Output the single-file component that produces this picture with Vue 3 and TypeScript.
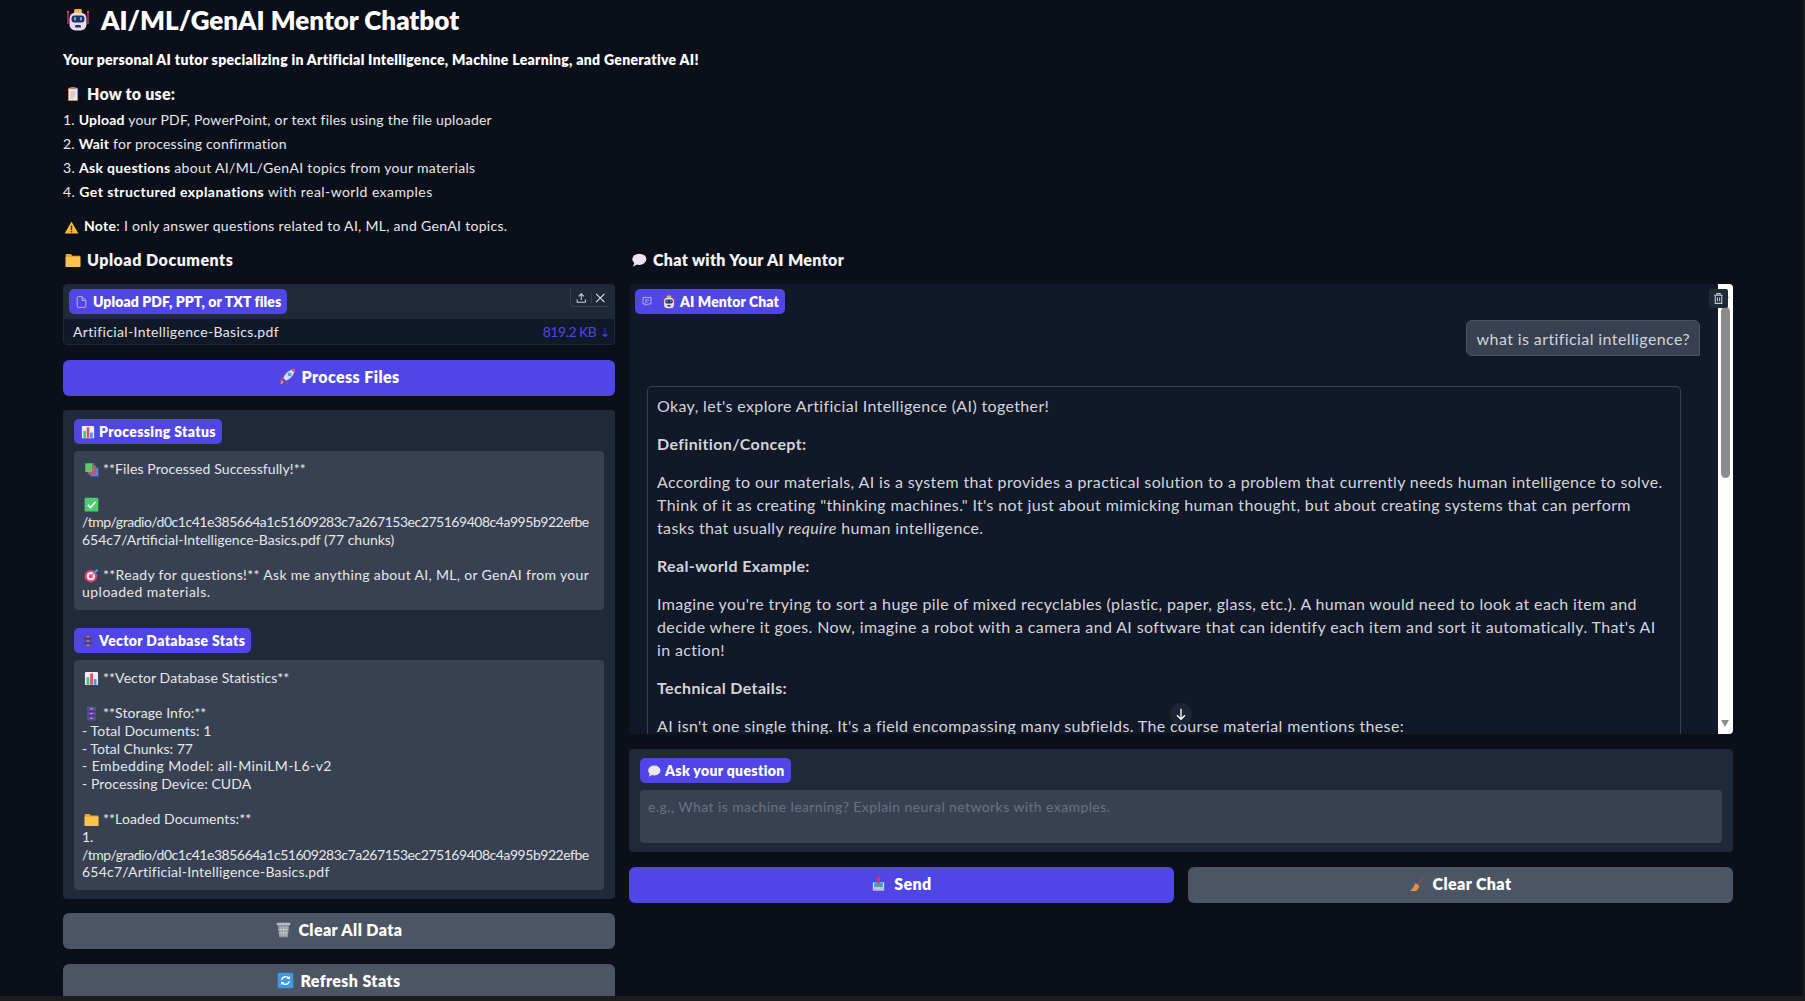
<script setup lang="ts">
const steps = [
  { n: '1.', b: 'Upload', t: ' your PDF, PowerPoint, or text files using the file uploader', fit: 'ls2' },
  { n: '2.', b: 'Wait', t: ' for processing confirmation', fit: 'ls2' },
  { n: '3.', b: 'Ask questions', t: ' about AI/ML/GenAI topics from your materials', fit: 'ls3' },
  { n: '4.', b: 'Get structured explanations', t: ' with real-world examples', fit: 'ls4' },
]
const hash = '/tmp/gradio/d0c1c41e385664a1c51609283c7a267153ec275169408c4a995b922efbe'
interface Line { text: string; icon?: string; fit?: string }
const statusLines: Line[] = [
  { icon: 'books', text: '**Files Processed Successfully!**', fit: 'ls1' },
  { text: '' },
  { icon: 'check', text: '' },
  { text: hash, fit: 'tight' },
  { text: '654c7/Artificial-Intelligence-Basics.pdf (77 chunks)' },
  { text: '' },
  { icon: 'target', text: '**Ready for questions!** Ask me anything about AI, ML, or GenAI from your', fit: 'ls3' },
  { text: 'uploaded materials.', fit: 'ls5' },
]
const statsLines: Line[] = [
  { icon: 'chart', text: '**Vector Database Statistics**', fit: 'ls1' },
  { text: '' },
  { icon: 'cabinet', text: '**Storage Info:**', fit: 'ls1' },
  { text: '- Total Documents: 1', fit: 'ls1' },
  { text: '- Total Chunks: 77' },
  { text: '- Embedding Model: all-MiniLM-L6-v2', fit: 'ls4' },
  { text: '- Processing Device: CUDA', fit: 'ls1' },
  { text: '' },
  { icon: 'folder', text: '**Loaded Documents:**', fit: 'ls1' },
  { text: '1.' },
  { text: hash, fit: 'tight' },
  { text: '654c7/Artificial-Intelligence-Basics.pdf', fit: 'ls2' },
]
</script>

<template>
  <div class="frame">
    <svg class="defs" aria-hidden="true">
      <defs>
        <symbol id="e-robot" viewBox="0 0 24 24">
          <path d="M2 5v11M22 5v11" stroke="#d5305a" stroke-width="1.4" />
          <circle cx="2" cy="4" r="1.2" fill="#e8345f" /><circle cx="22" cy="4" r="1.2" fill="#e8345f" />
          <rect x="8" y="1" width="8" height="4" rx="1.5" fill="#f2b632" />
          <rect x="3.5" y="4.5" width="17" height="18" rx="6" fill="#e4dcee" />
          <rect x="5.5" y="7.5" width="13" height="7" rx="3" fill="#26305c" />
          <rect x="8" y="9" width="2" height="3.6" rx="1" fill="#3fc6f2" /><rect x="14" y="9" width="2" height="3.6" rx="1" fill="#3fc6f2" />
          <rect x="9" y="17" width="6" height="2.6" rx="1.2" fill="#3a3350" />
        </symbol>
        <symbol id="e-clip" viewBox="0 0 24 24">
          <rect x="4.5" y="2.5" width="15" height="20" rx="1.5" fill="#c98a5a" />
          <rect x="6" y="4.5" width="12" height="16.5" fill="#eeeef2" />
          <rect x="8.5" y="1.5" width="7" height="3.5" rx="1" fill="#8b8f98" />
          <path d="M8 9h8M8 12h8M8 15h8M8 18h5" stroke="#9da2ad" stroke-width="1.2" />
        </symbol>
        <symbol id="e-warn" viewBox="0 0 24 24">
          <path d="M12 2.5 23 21.5H1Z" fill="#f6b73c" />
          <path d="M12 9v7" stroke="#3b2c10" stroke-width="2.2" /><circle cx="12" cy="18.6" r="1.3" fill="#3b2c10" />
        </symbol>
        <symbol id="e-folder" viewBox="0 0 24 24">
          <path d="M1 4a1 1 0 0 1 1-1h7l2 2.500h11a1 1 0 0 1 1 1V22H1Z" fill="#e9a52c" />
          <rect x="1" y="7.500" width="22" height="15" rx="1" fill="#fcc44f" />
        </symbol>
        <symbol id="e-speech" viewBox="0 0 24 24">
          <ellipse cx="12.5" cy="11" rx="10.5" ry="8.5" fill="#ece4f5" />
          <path d="M5 16 3 22l7-4Z" fill="#ece4f5" />
        </symbol>
        <symbol id="e-rocket" viewBox="0 0 24 24">
          <path d="M4 14 1 18l5-.5ZM10 20l-.5 4 4-3Z" fill="#e8424f" />
          <path d="M2 23c0-3 1-5 3-5.500l1.500 1.500C6 21 4.500 22.500 2 23Z" fill="#f5943c" />
          <path d="M22.500 1.500C15 2 9 7 6 14l4 4c7-3 12-9 12.500-16.500Z" fill="#d9dde8" />
          <circle cx="15" cy="9" r="2.600" fill="#3fa9e6" />
          <path d="M22.500 1.500c-2 .1-3.500.5-5 1.200l3.800 3.800c.7-1.500 1.100-3 1.200-5Z" fill="#e8424f" />
        </symbol>
        <symbol id="e-chart" viewBox="0 0 24 24">
          <rect x="1.500" y="1.500" width="21" height="21" rx="1.500" fill="#eceff3" />
          <rect x="4" y="10" width="4.500" height="12" fill="#4bc27a" />
          <rect x="9.800" y="4" width="4.500" height="18" fill="#e84a6a" />
          <rect x="15.600" y="13" width="4.500" height="9" fill="#3a97e0" />
        </symbol>
        <symbol id="e-books" viewBox="0 0 24 24">
          <rect x="10" y="9" width="13" height="14" fill="#5a7fe0" />
          <rect x="6" y="5.500" width="13" height="14" fill="#d9487c" />
          <rect x="2" y="2" width="13" height="14" fill="#65c66b" />
          <rect x="13" y="2" width="2" height="14" fill="#3e9a49" />
        </symbol>
        <symbol id="e-check" viewBox="0 0 24 24">
          <rect x="1" y="1" width="22" height="22" rx="2" fill="#4ecb71" />
          <path d="m6 12.500 4.500 4.500L18.500 7.500" fill="none" stroke="#fff" stroke-width="2.600" />
        </symbol>
        <symbol id="e-target" viewBox="0 0 24 24">
          <circle cx="11" cy="13" r="10" fill="#e8456a" /><circle cx="11" cy="13" r="6.500" fill="#f2e9ee" />
          <circle cx="11" cy="13" r="3.200" fill="#e8456a" />
          <path d="m11 13 10-10" stroke="#4a9fe0" stroke-width="2" /><path d="m19 2 3 .5.500 3-3 1-1.500-1.500Z" fill="#4a9fe0" />
        </symbol>
        <symbol id="e-cabinet" viewBox="0 0 24 24">
          <rect x="5" y="1" width="14" height="22" rx="1.500" fill="#5f4a9c" />
          <path d="M5 8.500h14M5 16h14" stroke="#352a63" stroke-width="1.200" />
          <path d="M10.500 4.500h3M10.500 12h3M10.500 19.500h3" stroke="#d9d3ec" stroke-width="1.500" />
        </symbol>
        <symbol id="e-trash" viewBox="0 0 24 24">
          <rect x="2.500" y="2.500" width="19" height="3.500" rx="1" fill="#b8bcc6" />
          <path d="M4 6h16l-2 17H6Z" fill="#9499a6" />
          <path d="M8 8l1 13M12 8v13M16 8l-1 13M5 12h14M5.500 17h13" stroke="#d6d9e0" stroke-width=".9" />
        </symbol>
        <symbol id="e-refresh" viewBox="0 0 24 24">
          <rect x="1" y="1" width="22" height="22" rx="2.500" fill="#3f97e8" />
          <path d="M6.500 11a5.800 5.800 0 0 1 10-2.500M17.500 13a5.800 5.800 0 0 1-10 2.500" fill="none" stroke="#fff" stroke-width="2" />
          <path d="m18 5.500.2 4.700-4.500-.5ZM6 18.500l-.2-4.700 4.500.5Z" fill="#fff" />
        </symbol>
        <symbol id="e-send" viewBox="0 0 24 24">
          <path d="M3 10h18v13H3Z" fill="#dfe2ea" />
          <rect x="5" y="10" width="14" height="8" fill="#38a3dc" />
          <path d="M3 18h6l1 2h4l1-2h6v5H3Z" fill="#c9b8d8" />
          <path d="M12 13V3" stroke="#e8344f" stroke-width="2.600" /><path d="m12 0 4.500 5.500h-9Z" fill="#e8344f" />
        </symbol>
        <symbol id="e-broom" viewBox="0 0 24 24">
          <path d="M23 0 11 15" stroke="#b8503f" stroke-width="1.400" />
          <path d="M9 11 15 16c-1 3.500-3 6-5 8H0c3-2 6-7 9-13Z" fill="#f58a35" />
        </symbol>
      </defs>
    </svg>

    <div class="page">
      <h1 class="title"><svg class="em em-title"><use href="#e-robot" /></svg>AI/ML/GenAI Mentor Chatbot</h1>
      <p class="tagline">Your personal AI tutor specializing in Artificial Intelligence, Machine Learning, and Generative AI!</p>
      <h3 class="howto"><svg class="em em-head"><use href="#e-clip" /></svg>How to use:</h3>
      <ol class="steps">
        <li v-for="s in steps" :key="s.n" :class="s.fit">{{ s.n }} <strong>{{ s.b }}</strong>{{ s.t }}</li>
      </ol>
      <p class="note"><svg class="em em-note"><use href="#e-warn" /></svg><strong>Note</strong>: I only answer questions related to AI, ML, and GenAI topics.</p>

      <div class="cols">
        <section class="col-left">
          <h3 class="sec"><svg class="em em-head"><use href="#e-folder" /></svg>Upload Documents</h3>

          <div class="file-panel">
            <div class="file-head">
              <span class="badge file-badge">
                <svg class="ico-file" viewBox="0 0 24 24" fill="none" stroke="#b9b5f4" stroke-width="1.800"><path d="M13 2H6a2 2 0 0 0-2 2v16a2 2 0 0 0 2 2h12a2 2 0 0 0 2-2V9z" /><path d="M13 2v7h7" /></svg>
                Upload PDF, PPT, or TXT files
              </span>
              <div class="file-tools">
                <svg viewBox="0 0 24 24" fill="none" stroke="#d1d5db" stroke-width="2"><path d="M12 16V4M7 9l5-5 5 5" /><path d="M4 15v4a1 1 0 0 0 1 1h14a1 1 0 0 0 1-1v-4" /></svg>
                <i class="tool-sep"></i>
                <svg viewBox="0 0 24 24" fill="none" stroke="#e5e7eb" stroke-width="2"><path d="M4 4l16 16M20 4 4 20" /></svg>
              </div>
            </div>
            <div class="file-row">
              <span class="file-name">Artificial-Intelligence-Basics.pdf</span>
              <span class="file-size">819.2 KB <b>⇣</b></span>
            </div>
          </div>

          <button class="btn primary"><svg class="em em-btn"><use href="#e-rocket" /></svg>Process Files</button>

          <div class="panel stacked">
            <div>
              <span class="badge small"><svg class="em em-badge"><use href="#e-chart" /></svg>Processing Status</span>
              <div class="box">
                <div v-for="(l, i) in statusLines" :key="i" class="line" :class="l.fit">
                  <svg v-if="l.icon" class="em em-line"><use :href="'#e-' + l.icon" /></svg>{{ l.text }}
                </div>
              </div>
            </div>
            <div>
              <span class="badge small"><svg class="em em-badge"><use href="#e-cabinet" /></svg>Vector Database Stats</span>
              <div class="box">
                <div v-for="(l, i) in statsLines" :key="i" class="line" :class="l.fit">
                  <svg v-if="l.icon" class="em em-line"><use :href="'#e-' + l.icon" /></svg>{{ l.text }}
                </div>
              </div>
            </div>
          </div>

          <button class="btn secondary"><svg class="em em-btn"><use href="#e-trash" /></svg>Clear All Data</button>
          <button class="btn secondary"><svg class="em em-btn"><use href="#e-refresh" /></svg>Refresh Stats</button>
        </section>

        <section class="col-right">
          <h3 class="sec sec-chat"><svg class="em em-head"><use href="#e-speech" /></svg>Chat with Your AI Mentor</h3>

          <div class="chat">
            <span class="badge chat-badge">
              <svg class="ico-chat" viewBox="0 0 24 24" fill="none" stroke="#b9b5f4" stroke-width="1.800"><path d="M4 4h16v13h-7l-3 3v-3H4Z" /><path d="M8 9h8M8 13h5" /></svg>
              <svg class="em em-badge"><use href="#e-robot" /></svg>AI Mentor Chat
            </span>

            <div class="messages">
              <div class="bubble-wrap"><div class="bubble">what is artificial intelligence?</div></div>
              <div class="bot">
                <p>Okay, let's explore Artificial Intelligence (AI) together!</p>
                <p><strong>Definition/Concept:</strong></p>
                <p>According to our materials, AI is a system that provides a practical solution to a problem that currently needs human intelligence to solve.<br />Think of it as creating "thinking machines." It's not just about mimicking human thought, but about creating systems that can perform<br />tasks that usually <em>require</em> human intelligence.</p>
                <p><strong>Real-world Example:</strong></p>
                <p>Imagine you're trying to sort a huge pile of mixed recyclables (plastic, paper, glass, etc.). A human would need to look at each item and<br />decide where it goes. Now, imagine a robot with a camera and AI software that can identify each item and sort it automatically. That's AI<br />in action!</p>
                <p><strong>Technical Details:</strong></p>
                <p>AI isn't one single thing. It's a field encompassing many subfields. The course material mentions these:</p>
              </div>
            </div>

            <div class="track">
              <div class="arrow-up"></div>
              <div class="thumb"></div>
              <div class="arrow"></div>
            </div>

            <div class="trash-btn">
              <svg viewBox="0 0 24 24" fill="none" stroke="#c4c8d0" stroke-width="2"><path d="M4 6h16M9 6V3h6v3M6 6v15h12V6M10 10v7M14 10v7" /></svg>
            </div>
            <div class="to-bottom">
              <svg viewBox="0 0 24 24" fill="none" stroke="#fff" stroke-width="2"><path d="M12 4v16M6 14l6 6 6-6" /></svg>
            </div>
          </div>

          <div class="panel input-panel">
            <span class="badge small"><svg class="em em-badge"><use href="#e-speech" /></svg>Ask your question</span>
            <textarea class="input" placeholder="e.g., What is machine learning? Explain neural networks with examples."></textarea>
          </div>

          <div class="actions">
            <button class="btn primary"><svg class="em em-btn em-sm"><use href="#e-send" /></svg>Send</button>
            <button class="btn secondary"><svg class="em em-btn em-sm"><use href="#e-broom" /></svg>Clear Chat</button>
          </div>
        </section>
      </div>
    </div>
  </div>
</template>

<style>
html, body { margin: 0; background: #1c1c1c; overflow: hidden; }
</style>

<style scoped>
.frame {
  width: 1805px;
  height: 1001px;
  background: #1c1c1c;
  overflow: hidden;
  font-family: "Lato", "Noto Sans", sans-serif;
  color: #e5e7eb;
}
.defs { position: absolute; width: 0; height: 0; }
.page {
  width: 1803px;
  height: 996px;
  box-sizing: border-box;
  padding: 0 69px 0 63px;
  background: #0b0f19;
  overflow: hidden;
}
.em { display: inline-block; flex: none; vertical-align: middle; }
.em-title { width: 24px; height: 24px; margin: 0 11px 0 3px; }
.em-head { width: 16px; height: 16px; margin: 0 6px 0 2px; }
.em-note { width: 15px; height: 15px; margin: 0 5px 0 1px; }
.em-btn { width: 17px; height: 17px; margin-right: 6px; }
.em-sm { width: 15px; height: 15px; margin-right: 8px; }
.em-badge { width: 14px; height: 14px; margin-right: 4px; }
.em-line { width: 15px; height: 15px; margin: 0 4px 0 2px; position: relative; top: -1px; }

.title {
  margin: 0;
  height: 40px;
  line-height: 40px;
  font-size: 26px;
  font-weight: 800;
  letter-spacing: 0;
  color: #fff;
  display: flex;
  align-items: center;
}
.tagline {
  margin: 10px 0 0;
  line-height: 20px;
  font-size: 14px;
  font-weight: 800;
  letter-spacing: 0.3px;
  color: #fff;
}
.howto, .sec {
  margin: 14px 0 0;
  line-height: 20px;
  height: 20px;
  font-size: 16px;
  font-weight: 800;
  color: #f3f4f6;
  display: flex;
  align-items: center;
}
.howto { letter-spacing: 0.2px; }
.steps { list-style: none; margin: 4px 0 0; padding: 0; }
.steps li { height: 24px; line-height: 24px; font-size: 14px; color: #e5e7eb; }
.steps strong, .note strong { color: #fff; font-weight: 700; }
.note { margin: 12px 0 0; line-height: 20px; font-size: 14px; letter-spacing: 0.3px; color: #e5e7eb; }

.cols {
  margin-top: 14px;
  display: grid;
  grid-template-columns: 552px 1104px;
  column-gap: 14px;
}
.col-left, .col-right { display: flex; flex-direction: column; }
.sec { margin: 0 0 14px; letter-spacing: 0.5px; }
.sec-chat { letter-spacing: 0.32px; }

.badge {
  display: inline-flex;
  align-items: center;
  height: 25px;
  box-sizing: border-box;
  padding: 0 6px;
  background: #4f46e5;
  border-radius: 5px;
  color: #fff;
  font-size: 14px;
  font-weight: 800;
  white-space: nowrap;
}
.badge.small { padding: 0 6px 0 7px; letter-spacing: 0.35px; }
.file-badge { letter-spacing: 0.1px; }

.file-panel {
  height: 61px;
  background: #1f2937;
  border-radius: 4px;
  border: 1px solid #1f2937;
  box-sizing: border-box;
  margin-bottom: 15px;
  display: flex;
  flex-direction: column;
}
.file-head {
  height: 34px;
  padding: 4px 5px 0;
  box-sizing: border-box;
  display: flex;
  justify-content: space-between;
  align-items: flex-start;
  position: relative;
}
.ico-file { width: 13px; height: 14px; margin-right: 5px; }
.file-tools {
  display: flex;
  align-items: center;
  gap: 3px;
  width: 39px;
  height: 18px;
  box-sizing: border-box;
  padding: 0 2px 0 4px;
  border-left: 1px solid #374151;
  border-bottom: 1px solid #374151;
  border-bottom-left-radius: 4px;
}
.file-tools svg { width: 14px; height: 14px; }
.tool-sep { width: 1px; height: 10px; background: #374151; }
.file-row {
  flex: 1;
  background: #111827;
  display: flex;
  justify-content: space-between;
  align-items: center;
  padding: 0 5px 0 9px;
  font-size: 14px;
  border-bottom-left-radius: 3px;
  border-bottom-right-radius: 3px;
}
.file-name { color: #e5e7eb; letter-spacing: 0.35px; }
.file-size { color: #4f46e5; letter-spacing: -0.5px; }
.file-size b { font-weight: 400; font-size: 12px; }

.btn {
  height: 36px;
  border: 0;
  border-radius: 6px;
  color: #fff;
  font-family: inherit;
  font-size: 16px;
  font-weight: 800;
  letter-spacing: 0.4px;
  display: flex;
  align-items: center;
  justify-content: center;
  padding: 0 0 3px;
  flex: none;
}
.primary { background: #4f46e5; }
.secondary { background: #4b5563; }
.col-left > .btn { margin-bottom: 15px; }
.col-left > .btn.primary { margin-bottom: 14px; }

.panel { background: #1f2937; border-radius: 4px; box-sizing: border-box; }
.stacked {
  padding: 9px 11px;
  margin-bottom: 14px;
  display: flex;
  flex-direction: column;
  gap: 18px;
}
.stacked .badge { display: flex; width: fit-content; }
.box {
  margin-top: 7px;
  background: #374151;
  border-radius: 4px;
  padding: 9px 8px 9px;
}
.line {
  height: 17.65px;
  line-height: 17.65px;
  font-size: 14px;
  color: #e5e7eb;
  white-space: nowrap;
}
.tight { letter-spacing: -0.47px; }
.ls1 { letter-spacing: 0.1px; }
.ls2 { letter-spacing: 0.22px; }
.ls3 { letter-spacing: 0.33px; }
.ls4 { letter-spacing: 0.43px; }
.ls5 { letter-spacing: 0.48px; }

.chat {
  position: relative;
  height: 450px;
  background: #111827;
  border-radius: 4px;
  overflow: hidden;
  display: flex;
  margin-bottom: 15px;
}
.chat-badge { position: absolute; left: 6px; top: 5px; padding: 0 6px; letter-spacing: 0.1px; z-index: 2; }
.ico-chat { width: 12px; height: 13px; margin-right: 9px; }
.trash-btn {
  position: absolute;
  right: 5px;
  top: 5px;
  width: 19px;
  height: 19px;
  background: #1f2937;
  border-radius: 2px;
  display: flex;
  align-items: center;
  justify-content: center;
  z-index: 2;
}
.trash-btn svg { width: 13px; height: 13px; }
.to-bottom {
  position: absolute;
  left: 541px;
  top: 419px;
  width: 22px;
  height: 22px;
  border-radius: 50%;
  background: rgba(31, 41, 55, 0.8);
  display: flex;
  align-items: center;
  justify-content: center;
  z-index: 2;
}
.to-bottom svg { width: 16px; height: 16px; }
.messages { flex: 1; min-width: 0; padding-top: 36px; overflow: hidden; }
.bubble-wrap { display: flex; justify-content: flex-end; padding-right: 18px; }
.bubble {
  height: 36px;
  line-height: 35px;
  box-sizing: border-box;
  padding: 0 9px 0 10px;
  background: #374151;
  border: 1px solid #4b5563;
  border-radius: 6px 6px 0 6px;
  color: #d1d5db;
  font-size: 16px;
  letter-spacing: 0.4px;
  white-space: nowrap;
}
.bot {
  margin: 30px 37px 0 18px;
  padding: 6.500px 9px;
  border: 1px solid #374151;
  border-bottom: 0;
  border-radius: 5px 5px 0 0;
  color: #d1d5db;
  font-size: 16px;
  line-height: 23px;
  letter-spacing: 0.36px;
}
.bot p { margin: 0 0 15px; white-space: nowrap; }
.bot strong { font-weight: 700; }
.track {
  width: 15px;
  flex: none;
  background: #fff;
  position: relative;
  box-sizing: border-box;
  padding: 23px 3px 0;
}
.thumb { width: 9px; height: 171px; background: #8c8c8c; border-radius: 5px; }
.arrow {
  position: absolute;
  left: 3px;
  bottom: 7px;
  width: 0;
  height: 0;
  border-left: 4.500px solid transparent;
  border-right: 4.500px solid transparent;
  border-top: 7px solid #8c8c8c;
}
.arrow-up {
  position: absolute;
  left: 3px;
  top: 7px;
  width: 0;
  height: 0;
  border-left: 4.500px solid transparent;
  border-right: 4.500px solid transparent;
  border-bottom: 7px solid #8c8c8c;
}

.input-panel {
  height: 103px;
  padding: 9px 11px;
  margin-bottom: 15px;
  display: flex;
  flex-direction: column;
  align-items: flex-start;
}
.input {
  margin-top: 7px;
  width: 100%;
  height: 53px;
  box-sizing: border-box;
  background: #374151;
  border: 0;
  border-radius: 4px;
  padding: 8px;
  resize: none;
  outline: none;
  font-family: inherit;
  font-size: 14px;
  line-height: 18px;
  letter-spacing: 0.4px;
  color: #e5e7eb;
}
.input::placeholder { color: #6b7280; opacity: 1; }
.actions { display: grid; grid-template-columns: 545px 545px; column-gap: 14px; }
</style>
